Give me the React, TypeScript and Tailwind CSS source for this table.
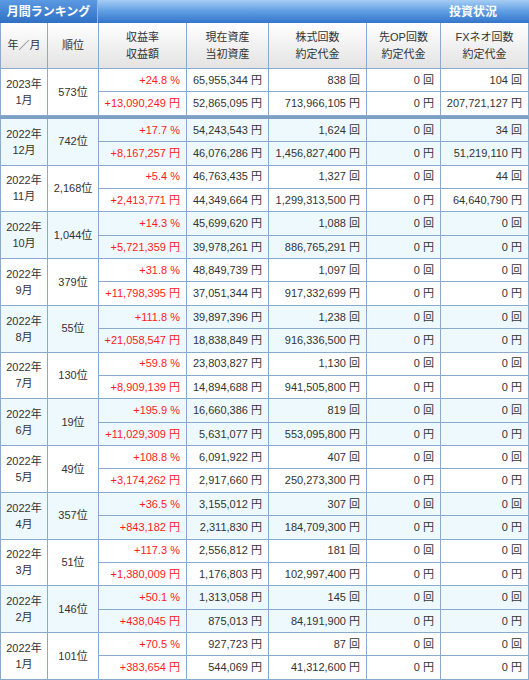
import React from "react";

type Row = {
  y: string;
  m: string;
  rank: string;
  rate: string;
  gain: string;
  now: string;
  init: string;
  stock: string;
  stockAmt: string;
  op: string;
  opAmt: string;
  fx: string;
  fxAmt: string;
};

const rows: Row[] = [
  { y: "2023年", m: "1月", rank: "573位", rate: "+24.8 %", gain: "+13,090,249 円", now: "65,955,344 円", init: "52,865,095 円", stock: "838 回", stockAmt: "713,966,105 円", op: "0 回", opAmt: "0 円", fx: "104 回", fxAmt: "207,721,127 円" },
  { y: "2022年", m: "12月", rank: "742位", rate: "+17.7 %", gain: "+8,167,257 円", now: "54,243,543 円", init: "46,076,286 円", stock: "1,624 回", stockAmt: "1,456,827,400 円", op: "0 回", opAmt: "0 円", fx: "34 回", fxAmt: "51,219,110 円" },
  { y: "2022年", m: "11月", rank: "2,168位", rate: "+5.4 %", gain: "+2,413,771 円", now: "46,763,435 円", init: "44,349,664 円", stock: "1,327 回", stockAmt: "1,299,313,500 円", op: "0 回", opAmt: "0 円", fx: "44 回", fxAmt: "64,640,790 円" },
  { y: "2022年", m: "10月", rank: "1,044位", rate: "+14.3 %", gain: "+5,721,359 円", now: "45,699,620 円", init: "39,978,261 円", stock: "1,088 回", stockAmt: "886,765,291 円", op: "0 回", opAmt: "0 円", fx: "0 回", fxAmt: "0 円" },
  { y: "2022年", m: "9月", rank: "379位", rate: "+31.8 %", gain: "+11,798,395 円", now: "48,849,739 円", init: "37,051,344 円", stock: "1,097 回", stockAmt: "917,332,699 円", op: "0 回", opAmt: "0 円", fx: "0 回", fxAmt: "0 円" },
  { y: "2022年", m: "8月", rank: "55位", rate: "+111.8 %", gain: "+21,058,547 円", now: "39,897,396 円", init: "18,838,849 円", stock: "1,238 回", stockAmt: "916,336,500 円", op: "0 回", opAmt: "0 円", fx: "0 回", fxAmt: "0 円" },
  { y: "2022年", m: "7月", rank: "130位", rate: "+59.8 %", gain: "+8,909,139 円", now: "23,803,827 円", init: "14,894,688 円", stock: "1,130 回", stockAmt: "941,505,800 円", op: "0 回", opAmt: "0 円", fx: "0 回", fxAmt: "0 円" },
  { y: "2022年", m: "6月", rank: "19位", rate: "+195.9 %", gain: "+11,029,309 円", now: "16,660,386 円", init: "5,631,077 円", stock: "819 回", stockAmt: "553,095,800 円", op: "0 回", opAmt: "0 円", fx: "0 回", fxAmt: "0 円" },
  { y: "2022年", m: "5月", rank: "49位", rate: "+108.8 %", gain: "+3,174,262 円", now: "6,091,922 円", init: "2,917,660 円", stock: "407 回", stockAmt: "250,273,300 円", op: "0 回", opAmt: "0 円", fx: "0 回", fxAmt: "0 円" },
  { y: "2022年", m: "4月", rank: "357位", rate: "+36.5 %", gain: "+843,182 円", now: "3,155,012 円", init: "2,311,830 円", stock: "307 回", stockAmt: "184,709,300 円", op: "0 回", opAmt: "0 円", fx: "0 回", fxAmt: "0 円" },
  { y: "2022年", m: "3月", rank: "51位", rate: "+117.3 %", gain: "+1,380,009 円", now: "2,556,812 円", init: "1,176,803 円", stock: "181 回", stockAmt: "102,997,400 円", op: "0 回", opAmt: "0 円", fx: "0 回", fxAmt: "0 円" },
  { y: "2022年", m: "2月", rank: "146位", rate: "+50.1 %", gain: "+438,045 円", now: "1,313,058 円", init: "875,013 円", stock: "145 回", stockAmt: "84,191,900 円", op: "0 回", opAmt: "0 円", fx: "0 回", fxAmt: "0 円" },
  { y: "2022年", m: "1月", rank: "101位", rate: "+70.5 %", gain: "+383,654 円", now: "927,723 円", init: "544,069 円", stock: "87 回", stockAmt: "41,312,600 円", op: "0 回", opAmt: "0 円", fx: "0 回", fxAmt: "0 円" },
];

const cols = "grid grid-cols-[48px_51px_88px_82px_98px_74px_88px]";
const line = "border-r border-b border-[#8aaacb]";

function Num({ v, red }: { v: string; red?: boolean }) {
  return (
    <div className={`${line} flex items-center justify-end pr-[6px] whitespace-nowrap ${red ? "text-[#ff1a1a]" : ""}`}>
      {v}
    </div>
  );
}

function Month({ r, blue }: { r: Row; blue: boolean }) {
  return (
    <div className={`${cols} grid-rows-2 h-[46.75px] ${blue ? "bg-[#eef9fe]" : "bg-white"}`}>
      <div className={`${line} border-l row-span-2 flex flex-col items-center justify-center leading-[16px]`}>
        <span>{r.y}</span>
        <span>{r.m}</span>
      </div>
      <div className={`${line} row-span-2 flex items-center justify-center`}>{r.rank}</div>
      <Num v={r.rate} red />
      <Num v={r.now} />
      <Num v={r.stock} />
      <Num v={r.op} />
      <Num v={r.fx} />
      <Num v={r.gain} red />
      <Num v={r.init} />
      <Num v={r.stockAmt} />
      <Num v={r.opAmt} />
      <Num v={r.fxAmt} />
    </div>
  );
}

const heads = [["年／月"], ["順位"], ["収益率", "収益額"], ["現在資産", "当初資産"], ["株式回数", "約定代金"], ["先OP回数", "約定代金"], ["FXネオ回数", "約定代金"]];

export default function App() {
  return (
    <div className="w-[529px] bg-white text-[11px] text-[#333] font-['Liberation_Sans','Noto_Sans_CJK_JP',sans-serif]">
      <div className="flex h-[23px] bg-linear-to-b from-[#a6cdf3] via-[#5e9ce3] to-[#3575ca]">
        <div className="w-[98px] flex items-center justify-center border-r border-[#8fbdeb] bg-linear-to-b from-[#5b99e1] to-[#2f70c5] text-white font-bold text-[12px]">
          月間ランキング
        </div>
        <div className="flex-1 flex items-center justify-end pr-[32px] text-white font-bold text-[12px]">投資状況</div>
      </div>

      <div className={`${cols} h-[46px]`}>
        {heads.map((h, i) => (
          <div
            key={i}
            className={`${line} ${i === 0 ? "border-l" : ""} flex flex-col items-center justify-center leading-[17px] bg-linear-to-b from-white to-[#e3e3e3]`}
          >
            {h.map((t) => (
              <span key={t}>{t}</span>
            ))}
          </div>
        ))}
      </div>

      <Month r={rows[0]} blue={false} />
      <div className="h-[3px] bg-[#7b9fc5]" />
      {rows.slice(1).map((r, i) => (
        <Month key={r.y + r.m} r={r} blue={i % 2 === 0} />
      ))}
    </div>
  );
}
